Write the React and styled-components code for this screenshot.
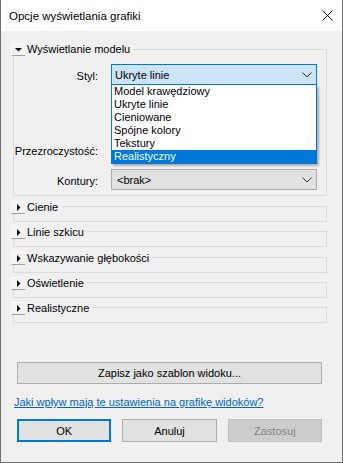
import React from "react";
import styled, { createGlobalStyle } from "styled-components";

const GlobalStyle = createGlobalStyle`
	html, body {
		margin: 0;
		padding: 0;
		background: #f0f0f0;
	}
	* { box-sizing: border-box; }
`;

const font = `"Liberation Sans", Arial, sans-serif`;

const Window = styled.div`
	width: 343px;
	height: 463px;
	display: flex;
	flex-direction: column;
	border: 1px solid #6f6f6f;
	border-top: none;
	font-family: ${font};
	font-size: 11px;
	color: #000;
	background: #f0f0f0;
`;

const TitleBar = styled.div`
	height: 31px;
	flex: none;
	display: flex;
	align-items: center;
	padding: 0 9px 0 8px;
	background: #fff;
	font-size: 11.5px;
`;

const Close = styled.svg`
	margin-left: auto;
	width: 11px;
	height: 11px;
`;

const Body = styled.div`
	flex: 1;
	display: flex;
	flex-direction: column;
	padding: 18px 15px 20px 12px;
`;

const Frame = styled.div`
	border: 1px solid #dcdcdc;
	padding: 0 0 ${(p) => p.$pb || 0}px 0;
	height: ${(p) => (p.$h ? `${p.$h}px` : "auto")};
`;

const Header = styled.div`
	height: 13px;
	margin: ${(p) => (p.$open ? -7 : -6)}px 0 0 -3px;
	display: flex;
	align-items: center;
`;

const Toggle = styled.div`
	width: 14px;
	height: 13px;
	display: flex;
	align-items: center;
	justify-content: center;
	background: #f3f3f3;
	border-top: 1px solid #fafafa;
	border-left: 1px solid #fafafa;
	border-bottom: 1px solid #a0a0a0;
`;

const Caption = styled.span`
	background: #f0f0f0;
	padding: 0 3px 0 2px;
	line-height: 13px;
	white-space: nowrap;
`;

const Fields = styled.div`
	display: flex;
	flex-direction: column;
	margin-top: 8px;
`;

const Field = styled.div`
	display: grid;
	grid-template-columns: 84px 206px;
	column-gap: 13px;
	align-items: center;
	height: 21px;
	margin-top: ${(p) => p.$mt || 0}px;
`;

const Label = styled.label`
	text-align: right;
	white-space: nowrap;
	transform: translateY(${(p) => p.$dy || 0}px);
`;

const SelectWrap = styled.div`
	position: relative;
	height: 21px;
`;

const Select = styled.div`
	height: 21px;
	display: flex;
	align-items: center;
	padding: 0 4px 0 ${(p) => (p.$active ? 3 : 5)}px;
	border: 1px solid ${(p) => (p.$active ? "#0078d7" : "#adadad")};
	background: ${(p) => (p.$active ? "#cce4f7" : "#e1e1e1")};
	svg { margin-left: auto; }
`;

const List = styled.ul`
	position: absolute;
	top: 100%;
	left: 0;
	width: 206px;
	margin: 0;
	padding: 0;
	list-style: none;
	background: #fff;
	border: 1px solid #0078d7;
	border-top: none;
	box-shadow: 2px 2px 2px rgba(0, 0, 0, 0.28);
	z-index: 2;
`;

const Item = styled.li`
	height: 13px;
	line-height: 13px;
	padding-left: 2px;
	background: ${(p) => (p.$selected ? "#0078d7" : "transparent")};
	color: ${(p) => (p.$selected ? "#fff" : "#000")};
`;

const Collapsed = styled.div`
	display: flex;
	flex-direction: column;
	gap: 9.25px;
	margin-top: 10px;
`;

const WideButton = styled.button`
	font: inherit;
	height: 22px;
	margin: auto 5px 0 4px;
	border: 1px solid #adadad;
	background: #e1e1e1;
	color: #000;
	padding: 0;
`;

const HelpLink = styled.a`
	margin: 11px 0 0 1px;
	color: #0066cc;
	text-decoration: underline;
	line-height: 14px;
	white-space: nowrap;
`;

const Buttons = styled.div`
	display: grid;
	grid-template-columns: repeat(3, 1fr);
	column-gap: 11px;
	margin: 10px 5px 0 4px;
`;

const Button = styled.button`
	font: inherit;
	height: 23px;
	padding: 0;
	border: ${(p) => (p.$default ? "2px solid #0078d7" : p.disabled ? "1px solid #bfbfbf" : "1px solid #adadad")};
	background: ${(p) => (p.disabled ? "#cccccc" : "#e1e1e1")};
	color: ${(p) => (p.disabled ? "#838383" : "#000")};
`;

const Chevron = () => (
	<svg width="10" height="6" viewBox="0 0 10 6">
		<path d="M0.5 0.5 L5 5 L9.5 0.5" fill="none" stroke="#333" strokeWidth="1" />
	</svg>
);

const Arrow = ({ open }) => (
	<svg width="7" height="7" viewBox="0 0 7 7">
		{open ? <polygon points="0,2 7,2 3.5,5.5" fill="#000" /> : <polygon points="2,0 5.5,3.5 2,7" fill="#000" />}
	</svg>
);

const Group = ({ title, open, children, ...rest }) => (
	<Frame {...rest}>
		<Header $open={open}>
			<Toggle>
				<Arrow open={open} />
			</Toggle>
			<Caption>{title}</Caption>
		</Header>
		{children}
	</Frame>
);

const styles = ["Model krawędziowy", "Ukryte linie", "Cieniowane", "Spójne kolory", "Tekstury", "Realistyczny"];
const closed = ["Cienie", "Linie szkicu", "Wskazywanie głębokości", "Oświetlenie", "Realistyczne"];

export default function App() {
	return (
		<>
			<GlobalStyle />
			<Window>
				<TitleBar>
					<span>Opcje wyświetlania grafiki</span>
					<Close viewBox="0 0 11 11">
						<path d="M0.5 0.5 L10.5 10.5 M10.5 0.5 L0.5 10.5" stroke="#000" strokeWidth="1" />
					</Close>
				</TitleBar>
				<Body>
					<Group title="Wyświetlanie modelu" open $pb={5}>
						<Fields>
							<Field>
								<Label $dy={1}>Styl:</Label>
								<SelectWrap>
									<Select $active>
										Ukryte linie
										<Chevron />
									</Select>
									<List>
										{styles.map((s) => (
											<Item key={s} $selected={s === "Realistyczny"}>
												{s}
											</Item>
										))}
									</List>
								</SelectWrap>
							</Field>
							<Field $mt={55}>
								<Label>Przezroczystość:</Label>
								<div />
							</Field>
							<Field $mt={8}>
								<Label $dy={1}>Kontury:</Label>
								<Select>
									&lt;brak&gt;
									<Chevron />
								</Select>
							</Field>
						</Fields>
					</Group>
					<Collapsed>
						{closed.map((t) => (
							<Group key={t} title={t} $h={16} />
						))}
					</Collapsed>
					<WideButton>Zapisz jako szablon widoku...</WideButton>
					<HelpLink href="#">Jaki wpływ mają te ustawienia na grafikę widoków?</HelpLink>
					<Buttons>
						<Button $default>OK</Button>
						<Button>Anuluj</Button>
						<Button disabled>Zastosuj</Button>
					</Buttons>
				</Body>
			</Window>
		</>
	);
}
